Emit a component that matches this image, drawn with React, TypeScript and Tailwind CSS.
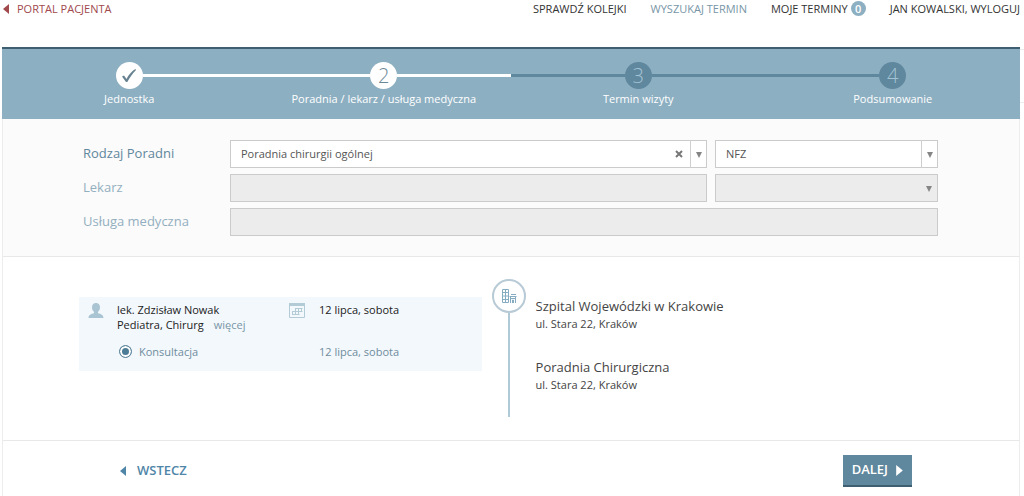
import { useState } from "react"
import clsx from "clsx"

const steps = [
  { label: "Jednostka", left: "", right: "done" },
  { label: "Poradnia / lekarz / usługa medyczna", left: "done", right: "done" },
  { label: "Termin wizyty", left: "todo", right: "todo" },
  { label: "Podsumowanie", left: "todo", right: "" },
]

const places = [
  { name: "Szpital Wojewódzki w Krakowie", address: "ul. Stara 22, Kraków" },
  { name: "Poradnia Chirurgiczna", address: "ul. Stara 22, Kraków" },
]

function Triangle({ className }: { className?: string }) {
  return (
    <svg viewBox="0 0 6 10" className={className} fill="currentColor" aria-hidden="true">
      <path d="M6 0v10L0 5z" />
    </svg>
  )
}

function StepLine({ state }: { state: string }) {
  return (
    <span
      className={clsx(
        "flex-1",
        state === "done" && "h-[3px] bg-white",
        state === "todo" && "h-[3px] bg-[#5f879d]"
      )}
    />
  )
}

function Stepper() {
  return (
    <ol className="grid min-w-0 flex-1 grid-cols-4 border-t-2 border-[#3f5f70] bg-[#8dafc2] pt-[13px] pb-3">
      {steps.map((step, i) => (
        <li key={step.label} className="flex flex-col items-center">
          <div className="flex w-full items-center">
            <StepLine state={step.left} />
            <span
              className={clsx(
                "flex size-[27px] items-center justify-center rounded-full text-[20px] leading-none font-light",
                i < 2 ? "bg-white text-[#6c8997]" : "bg-[#5f879d] text-[#a3c3d4]"
              )}
            >
              {i === 0 ? (
                <svg viewBox="0 0 16 16" className="size-4" fill="#66818f" aria-label="1">
                  <path d="M1 8.500 3 7.500l2.500 3.500C7.500 7 10.500 3.500 14.300 1l.7 1C11.500 5.500 8.700 9.500 6.300 14H5z" />
                </svg>
              ) : (
                i + 1
              )}
            </span>
            <StepLine state={step.right} />
          </div>
          <span className="mt-[2px] text-[11px] leading-4 whitespace-nowrap text-white">{step.label}</span>
        </li>
      ))}
    </ol>
  )
}

function Arrow({ line }: { line?: boolean }) {
  return (
    <span
      className={clsx(
        "pointer-events-none absolute inset-y-0 right-px flex w-4 items-center justify-center text-[#858585]",
        line && "border-l border-[#cfcfcf]"
      )}
    >
      <svg viewBox="0 0 6 6" className="mt-[2px] size-[6px]" fill="currentColor" aria-hidden="true">
        <path d="M0 0h6L3 6z" />
      </svg>
    </span>
  )
}

const field = "h-7 w-full appearance-none border pl-[10px] text-[11px] text-[#555] outline-none"
const enabled = "border-[#cbcbcb] bg-white"
const disabled = "border-[#cbcbcb] bg-[#ececec]"

function SearchForm() {
  const [clinic, setClinic] = useState("Poradnia chirurgii ogólnej")

  return (
    <form className="grid grid-cols-[139px_477fr_223fr] items-center gap-x-2 gap-y-1.5 border-b border-[#e8e8e8] bg-[#fbfbfb] pt-[21px] pr-[81px] pb-5 pl-20 text-[13px]">
      <label htmlFor="clinic" className="text-[#5f879d]">
        Rodzaj Poradni
      </label>
      <div className="relative">
        <select
          id="clinic"
          value={clinic}
          onChange={(e) => setClinic(e.target.value)}
          className={`${field} ${enabled}`}
        >
          <option value=""></option>
          <option>Poradnia chirurgii ogólnej</option>
        </select>
        <button
          type="button"
          aria-label="Wyczyść"
          onClick={() => setClinic("")}
          className="absolute inset-y-0 right-6 flex items-center text-[#777]"
        >
          <svg viewBox="0 0 8 8" className="size-2" stroke="currentColor" strokeWidth="2">
            <path d="M1 1l6 6M7 1 1 7" />
          </svg>
        </button>
        <Arrow line />
      </div>
      <div className="relative">
        <select aria-label="Płatnik" className={`${field} ${enabled}`}>
          <option>NFZ</option>
        </select>
        <Arrow line />
      </div>

      <label htmlFor="doctor" className="text-[#93afbf]">
        Lekarz
      </label>
      <input id="doctor" disabled className={`${field} ${disabled}`} />
      <div className="relative">
        <select aria-label="Rodzaj wizyty" disabled className={`${field} ${disabled} block`} />
        <Arrow />
      </div>

      <label htmlFor="service" className="text-[#93afbf]">
        Usługa medyczna
      </label>
      <input id="service" disabled className={`${field} ${disabled} col-span-2`} />
    </form>
  )
}

function VisitCard() {
  return (
    <div className="mt-[18px] grid h-[74px] grid-cols-[38px_172px_30px_1fr] content-start bg-[#f3f8fc] pt-[5px] text-[11px] leading-[15px] text-[#222]">
      <svg viewBox="0 0 16 16" className="mt-px ml-[9px] size-4" fill="#a9c4d3" aria-hidden="true">
        <path d="M8 0c2.500 0 4 1.700 4 4.200 0 1.900-.8 3.700-2 4.600v1.400c2.800.7 5.500 1.500 5.500 4.800H.5c0-3.300 2.700-4.100 5.500-4.800V8.800C4.800 7.900 4 6.100 4 4.200 4 1.700 5.500 0 8 0z" />
      </svg>
      <div>
        <p>lek. Zdzisław Nowak</p>
        <p>
          Pediatra, Chirurg
          <a href="#wiecej" className="ml-[10px] text-[#7896a6]">
            więcej
          </a>
        </p>
      </div>
      <svg viewBox="0 0 16 16" className="size-4" fill="none" stroke="#b3cad7" aria-hidden="true">
        <path d="M.5 3v12.500h15V3" />
        <path d="M0 2.500h16" strokeWidth="3" />
        <path d="M2 .5h12" stroke="#f3f8fc" strokeDasharray="1 2" />
        <path d="M6 6.500h7.500M3 9.500h10.500M3 12.500h7.500M6.500 6v7M9.500 6v7M12.500 6v4M3.500 9v4" />
      </svg>
      <p>12 lipca, sobota</p>
      <label className="col-span-3 mt-3 ml-10 flex items-center gap-[7px] text-[#6f8c9c]">
        <input
          type="radio"
          name="visit"
          defaultChecked
          className="size-[13px] appearance-none rounded-full border border-[#5f879d] checked:bg-[#4d7c96] checked:shadow-[inset_0_0_0_2px_#fff]"
        />
        Konsultacja
      </label>
      <p className="mt-3 text-[#6f8c9c]">12 lipca, sobota</p>
    </div>
  )
}

function Places() {
  return (
    <div className="flex gap-[10px]">
      <div className="flex flex-col items-center">
        <span className="flex size-[34px] items-center justify-center rounded-full border-2 border-[#b7cad5]">
          <svg viewBox="0 0 16 16" className="size-4" fill="none" stroke="#86acc2" aria-hidden="true">
            <path d="M1.500 1.500h6v13h-6zM4.500 1v14M1 4.500h7M1 8h7M1 11.500h7" />
            <path d="M9.500 15V8.500M14.500 15V8.500M11.500 15v-3h1v3M8.500 8.500h7M9 10.500h6M10 6.500h5" />
          </svg>
        </span>
        <span className="w-[2px] flex-1 bg-[#b0c9d7]" />
      </div>
      <div className="flex flex-col gap-[26px] pt-[18px] pb-6 text-[#444]">
        {places.map((place) => (
          <div key={place.name}>
            <h2 className="text-[13px] leading-[19px]">{place.name}</h2>
            <p className="text-[11px] leading-4">{place.address}</p>
          </div>
        ))}
      </div>
    </div>
  )
}

export default function App() {
  return (
    <div className="flex min-h-screen flex-col bg-white font-['Open_Sans',sans-serif]">
      <header className="flex h-[47px] items-start justify-between pr-1 pl-[3px] text-[11px] leading-[17px] text-[#333]">
        <a href="#portal" className="flex items-center gap-2 text-[#a0494d]">
          <Triangle className="h-[10px] w-[6px]" />
          PORTAL PACJENTA
        </a>
        <nav className="flex gap-6">
          <a href="#kolejki">SPRAWDŹ KOLEJKI</a>
          <a href="#wyszukaj" className="text-[#7896a6]">
            WYSZUKAJ TERMIN
          </a>
          <a href="#terminy" className="flex items-center gap-[3px]">
            MOJE TERMINY
            <span className="flex size-[15px] items-center justify-center rounded-full bg-[#8dafc2] font-semibold text-white">
              0
            </span>
          </a>
          <a href="#wyloguj">JAN KOWALSKI, WYLOGUJ</a>
        </nav>
      </header>

      <div className="flex pl-[2px]">
        <Stepper />
        <div className="mt-[2px] h-[54px] w-1 border-y border-[#ececec]" />
      </div>

      <main className="mr-1 ml-[2px] flex flex-1 flex-col border-x border-[#ececec]">
        <SearchForm />
        <section className="grid grid-cols-[403fr_528fr] gap-[10px] border-b border-[#e8e8e8] pt-[22px] pb-[23px] pl-[76px]">
          <VisitCard />
          <Places />
        </section>
        <footer className="flex items-center justify-between pt-[14px] pr-[107px] pb-[10px] pl-[117px] text-[13px] font-semibold">
          <button type="button" className="flex items-center gap-[11px] text-[#4f86a8]">
            <Triangle className="h-[10px] w-[6px]" />
            WSTECZ
          </button>
          <button
            type="button"
            className="flex h-8 items-center gap-2 border-b-2 border-[#3f5f70] bg-[#5f879d] px-[9px] text-white"
          >
            DALEJ
            <Triangle className="h-[11px] w-[7px] rotate-180" />
          </button>
        </footer>
      </main>
    </div>
  )
}
